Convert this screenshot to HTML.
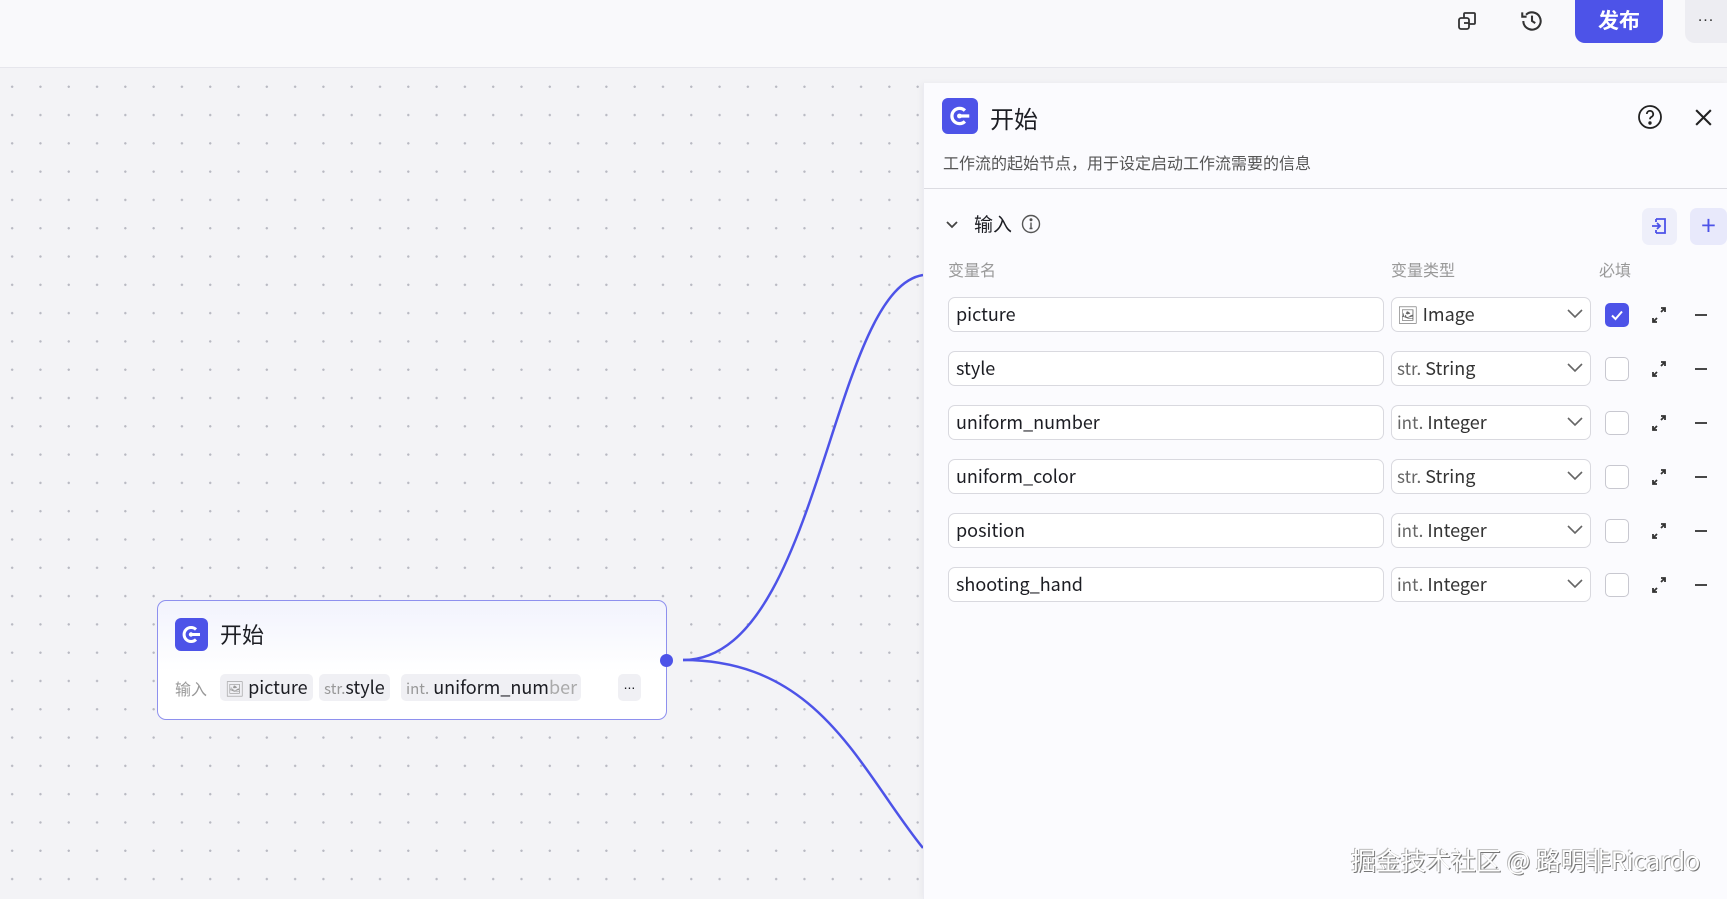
<!DOCTYPE html>
<html><head><meta charset="utf-8"><style>
*{box-sizing:border-box;margin:0;padding:0}
body{width:1727px;height:899px;overflow:hidden;position:relative;font-family:"Noto Sans CJK SC","Liberation Sans",sans-serif;color:#1c1d23;
background-color:#f3f3f6;background-image:radial-gradient(circle,#b8b9c2 1px,transparent 1.4px);background-size:28.3px 28.3px;background-position:-2px 16px}
.top{position:absolute;left:0;top:0;width:1727px;height:68px;background:#f9f9fb;border-bottom:1px solid #e6e6ec}
.abs{position:absolute}
.pub{left:1575px;top:0;width:88px;height:43px;background:#4d53e8;color:#fff;font-size:21px;font-weight:bold;border-radius:0 0 10px 10px;text-align:center;line-height:40px}
.more{left:1685px;top:0;width:42px;height:43px;background:#ededf2;border-radius:0 0 0 10px;text-align:center;line-height:34px;font-size:16px;color:#333;font-family:"Liberation Sans",sans-serif;letter-spacing:1px}
.panel{left:923px;top:83px;width:804px;height:816px;background:#fbfbfe;border-left:1px solid #ececf2;box-shadow:-2px 0 6px rgba(0,0,0,.04)}
.ico{background:#4d53e8;border-radius:6px}
.inp{position:absolute;left:948px;width:436px;height:35px;border:1px solid #d9d9df;border-radius:7px;background:#fff;font-size:18px;line-height:32px;padding-left:7px;color:#1c1d23}
.sel{position:absolute;left:1391px;width:200px;height:35px;border:1px solid #d9d9df;border-radius:7px;background:#fff;font-size:18px;line-height:32px;padding-left:5px;color:#333}
.sel i{font-style:normal;color:#666;font-size:17px}
.cb{position:absolute;left:1605px;width:24px;height:24px;border:1px solid #c8c8d0;border-radius:5px;background:#fff}
.node{left:157px;top:600px;width:510px;height:120px;border:1.5px solid #8e90ee;border-radius:9px;background:linear-gradient(#f2f3fd,#fff 60%)}
.chip{position:absolute;top:73px;height:27px;background:#f0f0f4;border-radius:5px;font-size:18px;line-height:26px;padding:0 5px;color:#1c1d23}
.chip i{font-style:normal;color:#999;font-size:15px}
</style></head><body>
<div class="top"></div>
<svg class="abs" style="left:1455px;top:9px" width="24" height="24" viewBox="0 0 24 24" fill="none" stroke="#333" stroke-width="1.8"><rect x="4" y="9" width="10" height="11" rx="2"/><path d="M9 9V5a1 1 0 0 1 1-1h9a1 1 0 0 1 1 1v9a1 1 0 0 1-1 1h-5"/><path d="M9 14h5"/></svg>
<svg class="abs" style="left:1519px;top:8px" width="26" height="26" viewBox="0 0 24 24" fill="none" stroke="#333" stroke-width="1.9"><path d="M4 12a8 8 0 1 0 2.5-5.8"/><path d="M3 4v4h4"/><path d="M12 7v5l3 2"/></svg>
<div class="abs pub">发布</div>
<div class="abs more">...</div>

<svg class="abs" style="left:0;top:0" width="1727" height="899"><path d="M683 660 C820 660 830 290 923 275" fill="none" stroke="#4d53e8" stroke-width="2.5"/><path d="M683 660 C820 660 860 770 923 848" fill="none" stroke="#4d53e8" stroke-width="2.5"/></svg>

<div class="abs node">
 <div class="abs ico" style="left:17px;top:17px;width:33px;height:33px"></div>
 <svg class="abs" style="left:17px;top:17px" width="33" height="33" viewBox="0 0 33 33" fill="none" stroke="#fff" stroke-width="3"><path d="M21 11.5a7 7 0 1 0 0 10"/><circle cx="16" cy="16.5" r="2.2" fill="#fff" stroke="none"/><path d="M17 16.5h8"/></svg>
 <div class="abs" style="left:62px;top:17px;font-size:22px">开始</div>
 <div class="abs" style="left:17px;top:75px;font-size:16px;color:#999">输入</div>
 <div class="chip" style="left:62px"><i>🖼</i> picture</div>
 <div class="chip" style="left:161px"><i>str.</i>style</div>
 <div class="chip" style="left:243px;width:180px;overflow:hidden;white-space:nowrap"><i>int.</i> uniform_num<span style="color:#aaa">ber</span></div>
 <div class="chip" style="left:460px;width:23px;padding:0;text-align:center;line-height:20px;font-family:'Liberation Sans',sans-serif;font-size:14px">...</div>
</div>
<div class="abs" style="left:660px;top:654px;width:13px;height:13px;border-radius:50%;background:#4d53e8"></div>

<div class="abs panel"></div>
<div class="abs ico" style="left:942px;top:98px;width:36px;height:36px"></div>
<svg class="abs" style="left:942px;top:98px" width="36" height="36" viewBox="0 0 33 33" fill="none" stroke="#fff" stroke-width="3"><path d="M21 11.5a7 7 0 1 0 0 10"/><circle cx="16" cy="16.5" r="2.2" fill="#fff" stroke="none"/><path d="M17 16.5h8"/></svg>
<div class="abs" style="left:990px;top:100px;font-size:24px">开始</div>
<svg class="abs" style="left:1637px;top:104px" width="26" height="26" viewBox="0 0 26 26" fill="none" stroke="#222" stroke-width="1.8"><circle cx="13" cy="13" r="11"/><path d="M9.8 10a3.2 3.2 0 1 1 4.5 3c-1 .5-1.3 1.2-1.3 2.3"/><circle cx="13" cy="19" r=".8" fill="#222"/></svg>
<svg class="abs" style="left:1693px;top:107px" width="21" height="21" viewBox="0 0 20 20" stroke="#222" stroke-width="2"><path d="M3 3l14 14M17 3L3 17"/></svg>
<div class="abs" style="left:943px;top:150px;font-size:16px;color:#555">工作流的起始节点，用于设定启动工作流需要的信息</div>
<div class="abs" style="left:924px;top:188px;width:803px;height:1px;background:#dcdce2"></div>
<svg class="abs" style="left:944px;top:218px" width="16" height="14" viewBox="0 0 16 14" fill="none" stroke="#444" stroke-width="1.8"><path d="M3 4l5 5 5-5"/></svg>
<div class="abs" style="left:974px;top:210px;font-size:19px">输入</div>
<svg class="abs" style="left:1021px;top:214px" width="20" height="20" viewBox="0 0 20 20" fill="none" stroke="#555" stroke-width="1.4"><circle cx="10" cy="10" r="8.5"/><path d="M10 8.5v6M8.5 14.5h3"/><circle cx="10" cy="5.8" r=".8" fill="#555"/></svg>
<div class="abs" style="left:1642px;top:208px;width:35px;height:37px;background:#eeeffa;border-radius:7px"></div>
<svg class="abs" style="left:1648px;top:215px" width="22" height="22" viewBox="0 0 22 22" fill="none" stroke="#4d53e8" stroke-width="1.8"><path d="M8 4h9v14H8M8 4v3M8 18v-3"/><path d="M4 11h8M9 8l3 3-3 3"/></svg>
<div class="abs" style="left:1690px;top:208px;width:37px;height:37px;background:#e8e9fb;border-radius:7px;color:#4d53e8;font-size:26px;text-align:center;line-height:34px">+</div>
<div class="abs" style="left:948px;top:257px;font-size:16px;color:#999">变量名</div>
<div class="abs" style="left:1391px;top:257px;font-size:16px;color:#999">变量类型</div>
<div class="abs" style="left:1599px;top:257px;font-size:16px;color:#999">必填</div>

<div class="inp" style="top:297px">picture</div>
<div class="sel" style="top:297px"><i>🖼</i> Image</div>
<div class="inp" style="top:351px">style</div>
<div class="sel" style="top:351px"><i>str.</i> String</div>
<div class="inp" style="top:405px">uniform_number</div>
<div class="sel" style="top:405px"><i>int.</i> Integer</div>
<div class="inp" style="top:459px">uniform_color</div>
<div class="sel" style="top:459px"><i>str.</i> String</div>
<div class="inp" style="top:513px">position</div>
<div class="sel" style="top:513px"><i>int.</i> Integer</div>
<div class="inp" style="top:567px">shooting_hand</div>
<div class="sel" style="top:567px"><i>int.</i> Integer</div>

<div class="cb" style="top:303px;background:#4d53e8;border-color:#4d53e8"></div>
<svg class="abs" style="left:1605px;top:303px" width="24" height="24" viewBox="0 0 24 24" fill="none" stroke="#fff" stroke-width="2"><path d="M7 12.5l3.5 3.5L17 8.5"/></svg>
<div class="cb" style="top:357px"></div>
<div class="cb" style="top:411px"></div>
<div class="cb" style="top:465px"></div>
<div class="cb" style="top:519px"></div>
<div class="cb" style="top:573px"></div>

<svg class="abs" style="left:0;top:0" width="1727" height="899" fill="none">
<defs>
<g id="r">
<path d="M1568 310l7 7 7-7" stroke="#666" stroke-width="1.6"/>
<path d="M1661 312l4-4M1661 308h4v4M1657 318l-4 4M1653 318v4h4" stroke="#333" stroke-width="1.8"/>
<path d="M1695 315h12" stroke="#333" stroke-width="1.8"/>
</g>
</defs>
<use href="#r"/><use href="#r" y="54"/><use href="#r" y="108"/><use href="#r" y="162"/><use href="#r" y="216"/><use href="#r" y="270"/>
</svg>
<div class="abs" style="left:1351px;top:842px;font-size:25px;color:#fff;text-shadow:1px 1px 0 #777,-1px -1px 0 #bbb;white-space:nowrap">掘金技术社区 @ 路明非Ricardo</div>
</body></html>
